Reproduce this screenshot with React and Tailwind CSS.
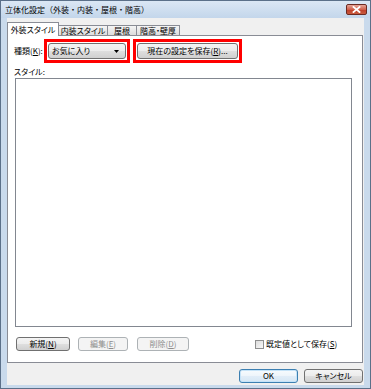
import React from 'react';

const jp = "font-['Noto_Sans_CJK_JP','Noto_Sans',sans-serif]";
const palt = "[font-feature-settings:'palt']";

const face =
  'rounded-[3px] border border-[#707070] bg-[linear-gradient(180deg,#f4f4f4_0%,#ececec_48%,#dedede_52%,#d0d0d0_100%)] text-[8px] leading-none text-black';
const btn = `flex items-center justify-center ${face}`;
const btnOff =
  'flex items-center justify-center rounded-[3px] border border-[#adb2b5] bg-[#f4f4f4] text-[8px] leading-none text-[#8d8d8d]';

function Tab({ label, active, w }) {
  if (active) {
    return (
      <div className={`relative z-10 -mb-px flex h-[14px] ${w} items-center justify-center border border-b-0 border-[#898c95] bg-white text-[8px] leading-none`}>
        {label}
      </div>
    );
  }
  return (
    <div className={`flex h-[10px] ${w} items-center justify-center border border-b-0 border-l-0 border-[#898c95] bg-[linear-gradient(180deg,#f5f5f5,#dcdcdc)] text-[8px] leading-none`}>
      {label}
    </div>
  );
}

export default function App() {
  return (
    <div className={`flex h-[389px] w-[371px] flex-col border border-[#5b7089] bg-[#c9daec] text-black ${jp}`}>
      {/* title bar */}
      <div className="flex h-[17px] items-center bg-[linear-gradient(180deg,#dbe7f4,#c3d6eb)] pl-[4px] pr-[3px]">
        <span className="text-[8px] leading-none">立体化設定（外装・内装・屋根・階高）</span>
        <div className="ml-auto flex h-[11px] w-[21px] items-center justify-center rounded-[2px] border border-[#6b2a22] bg-[linear-gradient(180deg,#e6a597_0%,#d0604c_50%,#c0402b_55%,#c85a3e_100%)]">
          <svg width="9" height="7" viewBox="0 0 9 7">
            <path d="M1.5 1 L7.5 6 M7.5 1 L1.5 6" stroke="#fff" strokeWidth="1.8" strokeLinecap="square" />
          </svg>
        </div>
      </div>

      {/* client area */}
      <div className={`mx-[6px] mb-[3px] flex flex-1 flex-col bg-[#f0f0f0] pt-[4px] ${palt}`}>
        <div className="flex h-[13px] items-end">
          <Tab label="外装スタイル" active w="w-[52px]" />
          <Tab label="内装スタイル" w="w-[49px]" />
          <Tab label="屋根" w="w-[29px]" />
          <Tab label="階高・壁厚" w="w-[43px]" />
        </div>

        <div className="mr-px flex h-[328px] flex-col border border-[#898c95] bg-white">
          <div className="flex items-center pl-[6px] pt-[3px]">
            <span className="w-[30px] text-[8px] leading-none">種類(<u>K</u>):</span>
            <div className="border-[3px] border-[#ff0000] p-px">
              <div className={`flex h-[16px] w-[78px] items-center justify-between pl-[3px] pr-[6px] ${face}`}>
                <span>お気に入り</span>
                <svg width="5" height="3" viewBox="0 0 5 3">
                  <path d="M0 0 H5 L2.5 3 Z" fill="#000" />
                </svg>
              </div>
            </div>
            <div className="ml-[3px] border-[3px] border-[#ff0000] p-px">
              <div className={`${btn} h-[16px] w-[101px]`}>現在の設定を保存(<u>R</u>)...</div>
            </div>
          </div>

          <div className="flex h-[15px] items-center pl-[6px] pt-[2px] text-[8px] leading-none">スタイル:</div>

          <div className="ml-[7px] h-[249px] w-[337px] border border-[#828790] bg-white" />

          <div className="mt-[10px] flex items-center pl-[8px]">
            <div className={`${btn} h-[14px] w-[54px]`}>新規(<u>N</u>)</div>
            <div className={`${btnOff} ml-[8px] h-[14px] w-[50px]`}>編集(<u>E</u>)</div>
            <div className={`${btnOff} ml-[9px] h-[14px] w-[52px]`}>削除(<u>D</u>)</div>
            <div className="ml-[66px] h-[9px] w-[9px] border border-[#8e8f8f] bg-[linear-gradient(135deg,#dcdcdc,#f8f8f8)]" />
            <span className="ml-[2px] text-[8px] leading-none">既定値として保存(<u>S</u>)</span>
          </div>
        </div>

        <div className="mt-[6px] flex justify-end gap-[6px] pr-px">
          <div className="flex h-[14px] w-[59px] items-center justify-center rounded-[3px] border border-[#3c7fb1] bg-[linear-gradient(180deg,#f7fbfe_0%,#eef5fb_48%,#e1edf8_52%,#d6e7f5_100%)] text-[8px] leading-none shadow-[inset_0_0_0_1px_#c5e3f8]">
            OK
          </div>
          <div className={`${btn} h-[14px] w-[59px]`}>キャンセル</div>
        </div>
      </div>
    </div>
  );
}
